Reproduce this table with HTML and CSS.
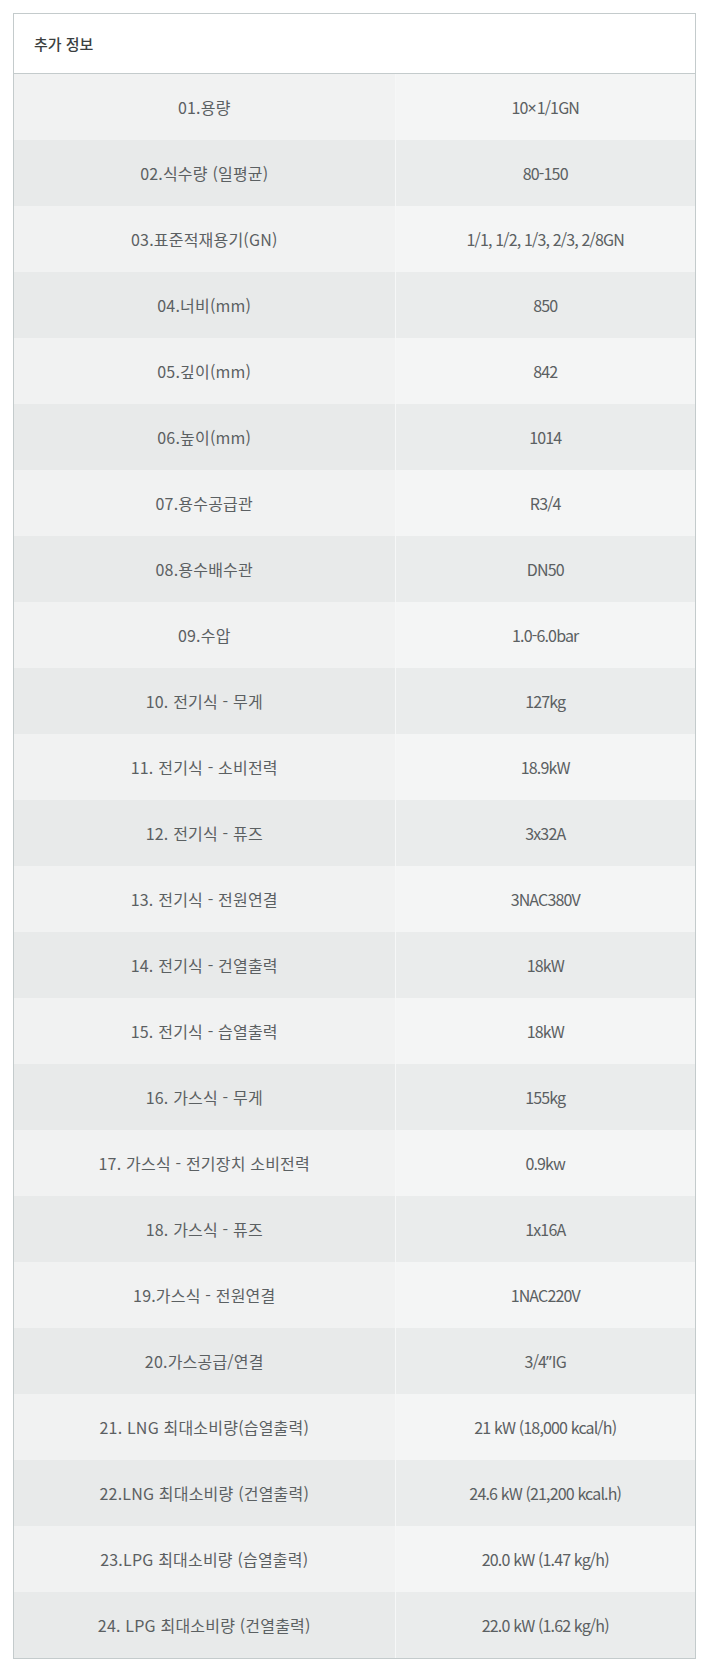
FILE: index.html
```html
<!DOCTYPE html>
<html lang="ko">
<head>
<meta charset="utf-8">
<title>추가 정보</title>
<link rel="stylesheet" href="styles.css">
</head>
<body>
<div class="page">
  <section class="panel">
    <h2 class="panel-title">추가 정보</h2>
    <table class="spec">
      <tbody>
        <tr><td class="k">01.용량</td><td class="v">10<span class="lat">×</span>1/1GN</td></tr>
        <tr><td class="k">02.식수량 (일평균)</td><td class="v">80-150</td></tr>
        <tr><td class="k">03.표준적재용기(GN)</td><td class="v">1/1, 1/2, 1/3, 2/3, 2/8GN</td></tr>
        <tr><td class="k">04.너비(mm)</td><td class="v">850</td></tr>
        <tr><td class="k">05.깊이(mm)</td><td class="v">842</td></tr>
        <tr><td class="k">06.높이(mm)</td><td class="v">1014</td></tr>
        <tr><td class="k">07.용수공급관</td><td class="v">R3/4</td></tr>
        <tr><td class="k">08.용수배수관</td><td class="v">DN50</td></tr>
        <tr><td class="k">09.수압</td><td class="v">1.0-6.0bar</td></tr>
        <tr><td class="k">10. 전기식 - 무게</td><td class="v">127kg</td></tr>
        <tr><td class="k">11. 전기식 - 소비전력</td><td class="v">18.9kW</td></tr>
        <tr><td class="k">12. 전기식 - 퓨즈</td><td class="v">3x32A</td></tr>
        <tr><td class="k">13. 전기식 - 전원연결</td><td class="v">3NAC380V</td></tr>
        <tr><td class="k">14. 전기식 - 건열출력</td><td class="v">18kW</td></tr>
        <tr><td class="k">15. 전기식 - 습열출력</td><td class="v">18kW</td></tr>
        <tr><td class="k">16. 가스식 - 무게</td><td class="v">155kg</td></tr>
        <tr><td class="k">17. 가스식 - 전기장치 소비전력</td><td class="v">0.9kw</td></tr>
        <tr><td class="k">18. 가스식 - 퓨즈</td><td class="v">1x16A</td></tr>
        <tr><td class="k">19.가스식 - 전원연결</td><td class="v">1NAC220V</td></tr>
        <tr><td class="k">20.가스공급/연결</td><td class="v">3/4<span class="lat">”</span>IG</td></tr>
        <tr><td class="k">21. LNG 최대소비량(습열출력)</td><td class="v">21 kW (18,000 kcal/h)</td></tr>
        <tr><td class="k">22.LNG 최대소비량 (건열출력)</td><td class="v">24.6 kW (21,200 kcal.h)</td></tr>
        <tr><td class="k">23.LPG 최대소비량 (습열출력)</td><td class="v">20.0 kW (1.47 kg/h)</td></tr>
        <tr><td class="k">24. LPG 최대소비량 (건열출력)</td><td class="v">22.0 kW (1.62 kg/h)</td></tr>
      </tbody>
    </table>
  </section>
</div>
</body>
</html>
```

FILE: styles.css
```css
html, body {
  margin: 0;
  padding: 0;
  background: #ffffff;
}

body {
  font-family: "Noto Sans CJK KR", "Noto Sans", sans-serif;
  color: #5b6062;
}

.page {
  padding: 13px 22px 17px 13px;
}

.panel {
  border: 1px solid #c4cbcc;
  background: #ffffff;
}

.panel-title {
  margin: 0;
  height: 59px;
  display: flex;
  align-items: center;
  padding: 0 20px;
  font-size: 15px;
  font-weight: 500;
  color: #3b3f40;
  border-bottom: 1px solid #c4cbcc;
}

.spec {
  width: 100%;
  border-collapse: collapse;
  table-layout: fixed;
}

.spec td {
  height: 66px;
  padding: 0 8px;
  text-align: center;
  vertical-align: middle;
  font-size: 16px;
  font-weight: 400;
  line-height: 20px;
  box-sizing: border-box;
}

.spec .k {
  width: 381px;
  letter-spacing: 0.2px;
}

.spec .v {
  border-left: 1px solid #f6f7f7;
  letter-spacing: -0.85px;
}

.lat {
  font-family: "Noto Sans", sans-serif;
  letter-spacing: 0;
}

.spec tr:nth-child(odd) .k { background: #f1f2f2; }
.spec tr:nth-child(odd) .v { background: #f4f5f5; }
.spec tr:nth-child(even) .k { background: #e8eaea; }
.spec tr:nth-child(even) .v { background: #eaecec; }
```
